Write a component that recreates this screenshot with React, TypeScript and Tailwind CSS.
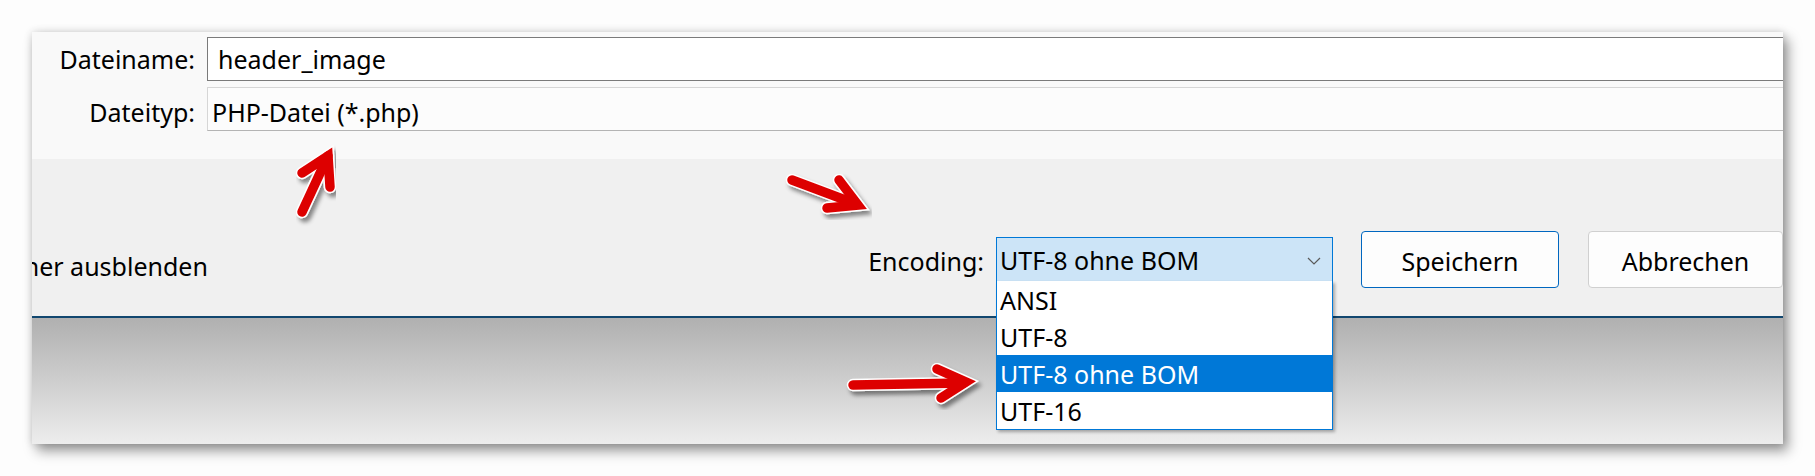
import React from 'react';

const encodings = ['ANSI', 'UTF-8', 'UTF-8 ohne BOM', 'UTF-16'];

// red annotation arrows drawn over the screenshot
const arrows = [
  { shaft: 'M302,212 L328,156', head: 'M302,173 L328,156 L330,187' },
  { shaft: 'M792,180 L856,204', head: 'M839,180 L858,205 L827,208' },
  { shaft: 'M853,385 L964,383', head: 'M937,369 L966,382 L941,398' },
];

const Arrows: React.FC = () => (
  <svg className="absolute inset-0 pointer-events-none" width={1815} height={476} viewBox="0 0 1815 476">
    <defs>
      <filter id="arrowShadow" x="-20%" y="-20%" width="140%" height="160%">
        <feDropShadow dx="3" dy="4" stdDeviation="2" floodColor="#000" floodOpacity="0.45" />
      </filter>
    </defs>
    {arrows.map((a, i) => (
      <g key={i} filter="url(#arrowShadow)" fill="none" strokeLinecap="round" strokeLinejoin="miter">
        <path d={a.shaft} stroke="#ffffff" strokeWidth={12.5} />
        <path d={a.head} stroke="#ffffff" strokeWidth={12.5} />
        <path d={a.shaft} stroke="#dd0000" strokeWidth={9.5} />
        <path d={a.head} stroke="#dd0000" strokeWidth={9.5} />
      </g>
    ))}
  </svg>
);

const App: React.FC = () => {
  return (
    <div className="relative w-[1815px] h-[476px] overflow-hidden bg-[#fdfdfd] pt-[32px] px-[32px] font-['Noto_Sans',sans-serif] text-[25px] leading-[34px] text-black">
      <div className="h-[412px] flex flex-col bg-[#f0f0f0] overflow-hidden shadow-[5px_7px_12px_rgba(0,0,0,0.4),0_0_8px_rgba(0,0,0,0.15)]">
        {/* file name + type */}
        <div className="h-[127px] bg-[#f9f9f9] pt-[5px] flex flex-col gap-[6px]">
          <div className="flex h-[44px]">
            <div className="w-[163px] text-right pt-[5px]">Dateiname:</div>
            <div className="ml-[12px] flex-1 bg-white border border-r-0 border-[#7a7a7a] pl-[10px] pt-[4px]">header_image</div>
          </div>
          <div className="flex h-[44px]">
            <div className="w-[163px] text-right pt-[8px]">Dateityp:</div>
            <div className="ml-[12px] flex-1 bg-[#fcfcfc] border border-r-0 border-[#d6d6d6] border-b-[#b4b4b4] pl-[4px] pt-[7px]">PHP-Datei (*.php)</div>
          </div>
        </div>

        {/* footer with encoding + buttons */}
        <div className="h-[157px] flex items-start pt-[72px]">
          <div className="ml-[-53px] mt-[18px] whitespace-nowrap">Ordner ausblenden</div>
          <div className="flex-1" />
          <div className="mt-[13px] mr-[12px] whitespace-nowrap">Encoding:</div>
          <div className="relative mt-[6px] mr-[28px] w-[337px] h-[45px] border border-[#0078d7] bg-[#cce4f7] pl-[3px] pt-[5px] whitespace-nowrap">
            UTF-8 ohne BOM
            <svg className="absolute right-[11px] top-[19px]" width="14" height="8" viewBox="0 0 14 8">
              <path d="M1 1 L7 7 L13 1" fill="none" stroke="#5a5a5a" strokeWidth="1.2" />
            </svg>
            <div className="absolute top-full left-[-1px] w-[337px] bg-white border border-t-0 border-[#0078d7] shadow-[2px_2px_3px_rgba(0,0,0,0.3)]">
              {encodings.map(e => (
                <div
                  key={e}
                  className={e === 'UTF-8 ohne BOM' ? 'h-[37px] leading-[37px] pt-[1px] pl-[3px] bg-[#0078d7] text-white' : 'h-[37px] leading-[37px] pt-[1px] pl-[3px]'}
                >
                  {e}
                </div>
              ))}
            </div>
          </div>
          <button className="w-[198px] h-[57px] mr-[29px] rounded-[4px] border border-[#0067c0] bg-[#fdfdfd] pt-[3px]">Speichern</button>
          <button className="w-[195px] h-[57px] rounded-[4px] border border-[#d0d0d0] bg-[#fdfdfd] pt-[3px]">Abbrechen</button>
        </div>

        <div className="h-[2px] bg-[#11476f]" />
        <div className="flex-1 bg-linear-to-b from-[#b0b0b0] to-[#ededed]" />
      </div>
      <Arrows />
    </div>
  );
};

export default App;
